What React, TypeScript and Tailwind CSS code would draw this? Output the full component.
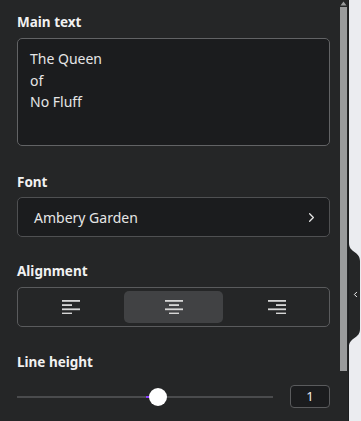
import { ChevronRight, ChevronLeft } from "lucide-react";

type Align = "left" | "center" | "right";

function AlignIcon({ align }: { align: Align }) {
  const rows = [18, 10, 18, 10];
  return (
    <svg width="18" height="14" viewBox="0 0 18 14" className="text-[#d6d6d6]">
      {rows.map((w, i) => {
        const x = align === "left" ? 0 : align === "right" ? 18 - w : (18 - w) / 2;
        return <rect key={i} x={x} y={i * 4.2} width={w} height="1.8" fill="currentColor" />;
      })}
    </svg>
  );
}

function Label({ children }: { children: React.ReactNode }) {
  return <div className="text-[13.5px] leading-5 font-bold text-[#f1f1f1]">{children}</div>;
}

export default function App() {
  const aligns: Align[] = ["left", "center", "right"];

  return (
    <div
      className="flex h-[421px] w-[361px] overflow-hidden bg-[#ebecf0]"
      style={{ fontFamily: '"Noto Sans", "Open Sans", sans-serif' }}
    >
      <div className="w-[338px] shrink-0 bg-[#252627] pt-3 pl-[17px] pr-[8px]">
        <Label>Main text</Label>
        <div className="mt-[6px] h-[108px] rounded-[5px] border border-[#626365] bg-[#1b1c1e] px-3 pt-[9px] text-[14px] leading-[21.5px] text-[#e6e6e6]">
          The Queen
          <br />
          of
          <br />
          No Fluff
        </div>

        <div className="mt-[26px]">
          <Label>Font</Label>
        </div>
        <div className="mt-[5px] flex h-10 items-center justify-between rounded-[5px] border border-[#4f5052] bg-[#1b1c1e] pl-4 pr-[10px] text-[14px] text-[#e6e6e6]">
          <span>Ambery Garden</span>
          <ChevronRight size={15} strokeWidth={2} className="text-[#e6e6e6]" />
        </div>

        <div className="mt-[24px]">
          <Label>Alignment</Label>
        </div>
        <div className="mt-[6px] flex h-10 gap-1 rounded-[5px] border border-[#5a5b5d] p-[3px]">
          {aligns.map((a) => (
            <div
              key={a}
              className={
                "flex flex-1 items-center justify-center rounded-[5px] " +
                (a === "center" ? "bg-[#414244]" : "")
              }
            >
              <AlignIcon align={a} />
            </div>
          ))}
        </div>

        <div className="mt-[25px]">
          <Label>Line height</Label>
        </div>
        <div className="mt-[13px] flex items-center">
          <div className="relative h-[2px] w-[256px] bg-[#4a4b4d]">
            <div className="absolute left-[129px] top-0 h-[2px] w-[12px] bg-[#8b3dff]" />
            <div className="absolute left-[132px] top-[-8px] h-[18px] w-[18px] rounded-full bg-white" />
          </div>
          <div className="ml-auto flex h-[23px] w-[40px] items-center justify-center rounded-[4px] border border-[#5a5b5d] bg-[#1b1c1e] text-[13px] text-[#eeeeee]">
            1
          </div>
        </div>
      </div>

      <div className="relative w-[11px] shrink-0 border-r border-[#1d1e20] bg-[#252627]">
        <svg width="7" height="5" viewBox="0 0 7 5" className="absolute left-[2px] top-[1px]">
          <path d="M3.5 0.5 L6.5 4.5 L0.5 4.5 Z" fill="#9a9b9c" />
        </svg>
        <div className="absolute left-[2px] top-[7px] h-[364px] w-[7px] bg-[#9a9b9c]" />
      </div>

      <div className="relative flex-1">
        <svg width="11" height="104" viewBox="0 0 11 104" className="absolute left-0 top-[243px]">
          <path d="M0 0 C0 10 11 8 11 18 L11 86 C11 96 0 94 0 104 Z" fill="#252627" />
        </svg>
        <ChevronLeft size={9} strokeWidth={2.5} className="absolute left-[2px] top-[290px] text-white" />
      </div>
    </div>
  );
}
